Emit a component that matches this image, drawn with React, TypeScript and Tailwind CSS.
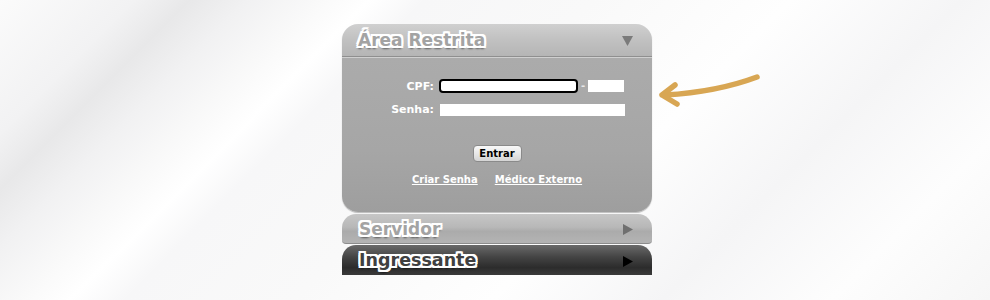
import React from "react";

const outline =
  "[text-shadow:-2px_-2px_0_#fff,0_-2px_0_#fff,2px_-2px_0_#fff,2px_0_0_#fff,2px_2px_0_#fff,0_2px_0_#fff,-2px_2px_0_#fff,-2px_0_0_#fff,-1px_-2px_0_#fff,1px_-2px_0_#fff,-1px_2px_0_#fff,1px_2px_0_#fff,0_3px_2px_rgba(0,0,0,0.5)]";

function TriDown({ color }: { color: string }) {
  return (
    <svg width="11" height="10" viewBox="0 0 11 10">
      <path d="M0 0 H11 L5.5 10 Z" fill={color} />
    </svg>
  );
}

function TriRight({ color }: { color: string }) {
  return (
    <svg width="10" height="11" viewBox="0 0 10 11">
      <path d="M0 0 L10 5.5 L0 11 Z" fill={color} />
    </svg>
  );
}

export default function App() {
  return (
    <div className="w-[990px] h-[300px] overflow-hidden bg-[linear-gradient(135deg,#fbfbfb_0px,#f2f2f3_95px,#e8e8e9_134px,#f1f1f2_175px,#fafafa_230px,#ffffff_262px,#f7f7f8_300px,#f9f9f9_420px,#fefefe_560px,#f5f5f6_680px,#fdfdfd_800px,#f6f6f6_912px)] font-['DejaVu_Sans',sans-serif]">
      <div className="flex justify-center pt-[24px] pl-[4px]">
        <div className="relative w-[310px]">
          {/* Área Restrita panel */}
          <div className="rounded-[16px] overflow-hidden shadow-[0_1px_1px_rgba(0,0,0,0.25)]">
            <div className="h-[33px] flex items-center justify-between pl-[16px] pr-[19px] pt-[1px] bg-[linear-gradient(180deg,#d0d0d0_0%,#c2c2c2_45%,#b5b5b5_100%)] border-b border-[#8f8f8f]">
              <span className={`text-[17px] leading-none font-bold text-[#a3a3a3] ${outline}`}>
                Área Restrita
              </span>
              <TriDown color="#7b7b7b" />
            </div>
            <div className="h-[155px] border-t border-[#cfcfcf] bg-[linear-gradient(180deg,#ababab_0%,#a6a6a6_60%,#9e9e9e_100%)] flex flex-col">
              <div className="flex items-center mt-[21px] h-[14px]">
                <span className="w-[92px] text-right text-white text-[11px] font-bold leading-none">CPF:</span>
                <div className="ml-[5px] w-[139px] h-[14px] bg-white border-2 border-black rounded-[4px]" />
                <span className="ml-[3px] text-[#e8e8e8] text-[10px] font-bold leading-none">-</span>
                <div className="ml-[3px] w-[36px] h-[12px] bg-white" />
              </div>
              <div className="flex items-center mt-[10px] h-[13px]">
                <span className="w-[92px] text-right text-white text-[11px] font-bold leading-none">Senha:</span>
                <div className="ml-[6px] w-[185px] h-[12px] bg-white" />
              </div>
              <div className="flex justify-center mt-[29px]">
                <div className="w-[49px] h-[17px] rounded-[4px] border border-[#8a8a8a] bg-[linear-gradient(180deg,#f8f8f8_0%,#e8e8e8_50%,#d4d4d4_100%)] flex items-center justify-center text-[10px] font-bold text-black leading-none">
                  Entrar
                </div>
              </div>
              <div className="flex justify-center gap-[17px] mt-[13px] text-white text-[10px] font-bold underline leading-none">
                <span>Criar Senha</span>
                <span>Médico Externo</span>
              </div>
            </div>
          </div>

          {/* Servidor tab */}
          <div className="mt-[2px] h-[30px] rounded-t-[14px] rounded-b-[4px] flex items-center justify-between pl-[17px] pr-[19px] pt-[2px] bg-[linear-gradient(180deg,#c6c6c6_0%,#b8b8b8_45%,#ababab_60%,#b4b4b4_100%)] border-b border-[#8c8c8c]">
            <span className={`text-[17px] leading-none font-bold text-[#a3a3a3] ${outline}`}>
              Servidor
            </span>
            <TriRight color="#6f6f6f" />
          </div>

          {/* Ingressante tab */}
          <div className="mt-[1px] h-[30px] rounded-t-[14px] flex items-center justify-between pl-[17px] pr-[19px] pt-[2px] bg-[linear-gradient(180deg,#6a6a6a_0%,#444444_40%,#2c2c2c_75%,#3a3a3a_100%)]">
            <span className={`text-[17.5px] leading-none font-bold text-[#404040] ${outline}`}>
              Ingressante
            </span>
            <TriRight color="#000000" />
          </div>

          {/* Arrow */}
          <svg
            className="absolute left-[313px] top-[46px]"
            width="110"
            height="45"
            viewBox="0 0 110 45"
            fill="none"
          >
            <path
              d="M102 7 Q62 22 10 25"
              stroke="#d8a653"
              strokeWidth="5.5"
              strokeLinecap="round"
            />
            <path
              d="M20 15 L7 25 L22 34"
              stroke="#d8a653"
              strokeWidth="5.5"
              strokeLinecap="round"
              strokeLinejoin="round"
            />
          </svg>
        </div>
      </div>
    </div>
  );
}
